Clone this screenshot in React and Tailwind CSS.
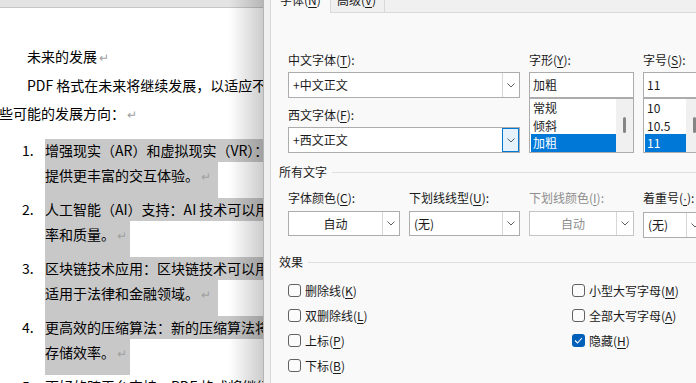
import React from "react";

const cjk = "font-['Noto_Sans_CJK_SC','Noto_Sans',sans-serif]";

const Mark = () => <span className="text-[#a0a0a0] text-[12px] ml-[2px]">↵</span>;

const U = ({ c }) => <span className="underline underline-offset-[2px]">{c}</span>;

const items = [
  {
    n: "1.",
    a: "增强现实（AR）和虚拟现实（VR）：PDF 文件可能会集成 AR 和 VR 内容，",
    b: "提供更丰富的交互体验。",
    w: "w-[173px]",
  },
  {
    n: "2.",
    a: "人工智能（AI）支持：AI 技术可以用于自动化文档处理，提高处理效",
    b: "率和质量。",
    w: "w-[85px]",
  },
  {
    n: "3.",
    a: "区块链技术应用：区块链技术可以用于确保 PDF 文件的真实性和完整性，",
    b: "适用于法律和金融领域。",
    w: "w-[173px]",
  },
  {
    n: "4.",
    a: "更高效的压缩算法：新的压缩算法将进一步减小文件大小，提高传输和",
    b: "存储效率。",
    w: "w-[85px]",
  },
];

const Chevron = () => (
  <svg width="8" height="5" viewBox="0 0 8 5" fill="none">
    <path d="M0.5 0.5L4 4L7.5 0.5" stroke="#5c5c5c" strokeWidth="1" />
  </svg>
);

function Combo({ className, text, center, disabled, focused }) {
  return (
    <div className={`flex border bg-white ${disabled ? "border-[#c4c4c4]" : "border-[#acacac]"} ${className}`}>
      <div
        className={`flex-1 flex items-center px-[4px] whitespace-nowrap overflow-hidden ${center ? "justify-center" : ""} ${disabled ? "text-[#8d8d8d]" : ""}`}
      >
        {text}
      </div>
      <div
        className={`w-[17px] shrink-0 flex items-center justify-center ${focused ? "border border-[#0078d4] bg-[#e5f1fb]" : "border-l border-[#d6d6d6]"}`}
      >
        <Chevron />
      </div>
    </div>
  );
}

function ListBox({ items, sel, className }) {
  return (
    <div className={`flex border border-[#acacac] bg-white h-[55px] ${className}`}>
      <div className="flex-1 pl-[1px] overflow-hidden">
        {items.map((t, i) => (
          <div
            key={t}
            className={`h-[17.5px] leading-[17.5px] pl-[2px] whitespace-nowrap ${i === sel ? "bg-[#0078d7] text-white" : ""}`}
          >
            {t}
          </div>
        ))}
      </div>
      <div className="w-[17px] shrink-0 bg-[#f0f0f0] flex justify-center pt-[18px]">
        <div className="w-[3px] h-[16px] bg-[#858585] rounded-full" />
      </div>
    </div>
  );
}

function Check({ label, checked }) {
  return (
    <div className="h-[25px] flex items-center">
      <div
        className={`w-[13px] h-[13px] rounded-[3px] flex items-center justify-center ${checked ? "bg-[#005fb8]" : "border border-[#616161] bg-[#fbfbfb]"}`}
      >
        {checked && (
          <svg width="9" height="7" viewBox="0 0 9 7" fill="none">
            <path d="M1 3.5L3.5 6L8 1" stroke="white" strokeWidth="1.1" />
          </svg>
        )}
      </div>
      <span className="ml-[4px] whitespace-nowrap">{label}</span>
    </div>
  );
}

function Header({ text }) {
  return (
    <div className="flex items-center pl-[8px] h-[16px] leading-[16px]">
      <span className="whitespace-nowrap">{text}</span>
      <div className="flex-1 h-px bg-[#e0e0e0] ml-[5px]" />
    </div>
  );
}

function Document() {
  return (
    <div className={`relative w-[263px] h-full overflow-hidden bg-white text-[14px] text-black ${cjk}`}>
      <div className="h-[8px] bg-[#e4e4e4] border-b border-[#c6c6c6]" />
      <div className="mt-[34px] leading-[28px] pl-[27px] whitespace-nowrap">
        未来的发展
        <Mark />
      </div>
      <div className="leading-[28px] whitespace-nowrap">
        <div className="pl-[27px]">PDF 格式在未来将继续发展，以适应不断变化的技术需求。以下是一</div>
        <div className="-ml-[1px]">
          些可能的发展方向：
          <Mark />
        </div>
      </div>
      <div className="mt-[11px]">
        {items.map((it) => (
          <div key={it.n}>
            <div className="h-[23px] flex">
              <div className="w-[45px] shrink-0 pl-[22px] leading-[23px]">{it.n}</div>
              <div className="flex-1 min-w-0 overflow-hidden bg-[#c8c8c8] leading-[23px] whitespace-nowrap">{it.a}</div>
            </div>
            <div className="h-[36px] flex">
              <div className="w-[45px] shrink-0" />
              <div className={`${it.w} bg-[#c8c8c8] leading-[26px] whitespace-nowrap`}>
                {it.b}
                <Mark />
              </div>
            </div>
          </div>
        ))}
        <div className="h-[23px] flex">
          <div className="w-[45px] shrink-0 pl-[22px] leading-[23px]">5.</div>
          <div className="flex-1 min-w-0 overflow-hidden leading-[23px] whitespace-nowrap">
            更好的跨平台支持：PDF 格式将继续优化在不同设备上的显示效果，
          </div>
        </div>
      </div>
      <div className="absolute right-0 top-0 bottom-0 w-[34px] bg-linear-to-r from-transparent to-black/20 pointer-events-none" />
    </div>
  );
}

function FontDialog() {
  return (
    <div className={`flex-1 h-full overflow-hidden bg-[#f0f0f0] border-l border-[#b4b4b4] pl-[6px] text-[12px] text-[#1a1a1a] ${cjk}`}>
      <div className="w-[440px] h-full flex flex-col border-l border-[#d9d9d9]">
        <div className="h-[13px] flex shrink-0">
          <div className="w-[60px] bg-[#f9f9f9] border-r border-[#d9d9d9] overflow-hidden">
            <div className="-mt-[8px] leading-[16px] pl-[9px] whitespace-nowrap">
              字体(<U c="N" />)
            </div>
          </div>
          <div className="w-[54px] bg-[#f0f0f0] border-r border-b border-[#d9d9d9] overflow-hidden">
            <div className="-mt-[8px] leading-[16px] pl-[6px] whitespace-nowrap">
              高级(<U c="V" />)
            </div>
          </div>
          <div className="flex-1 border-b border-[#d9d9d9]" />
        </div>

        <div className="flex-1 bg-[#f9f9f9]">
          <div className="flex gap-[9px] pl-[17px] mt-[39px]">
            <div className="w-[232px] shrink-0">
              <div className="leading-[16px]">
                中文字体(<U c="T" />):
              </div>
              <Combo className="mt-[4px] h-[26px]" text="+中文正文" />
              <div className="leading-[16px] mt-[9px]">
                西文字体(<U c="F" />):
              </div>
              <Combo className="mt-[4px] h-[26px]" text="+西文正文" focused />
            </div>
            <div className="w-[105px] shrink-0">
              <div className="leading-[16px]">
                字形(<U c="Y" />):
              </div>
              <div className="mt-[4px] h-[26px] border border-[#acacac] bg-white flex items-center px-[3px]">加粗</div>
              <ListBox items={["常规", "倾斜", "加粗"]} sel={2} />
            </div>
            <div className="w-[61px] shrink-0">
              <div className="leading-[16px] whitespace-nowrap">
                字号(<U c="S" />):
              </div>
              <div className="mt-[4px] h-[26px] border border-[#acacac] bg-white flex items-center px-[3px]">11</div>
              <ListBox items={["10", "10.5", "11"]} sel={2} />
            </div>
          </div>

          <div className="mt-[11px]">
            <Header text="所有文字" />
          </div>

          <div className="flex gap-[9px] pl-[17px] mt-[10px]">
            <div className="w-[112px] shrink-0">
              <div className="leading-[16px] whitespace-nowrap">
                字体颜色(<U c="C" />):
              </div>
              <Combo className="mt-[5px] h-[25px]" text="自动" center />
            </div>
            <div className="w-[111px] shrink-0">
              <div className="leading-[16px] whitespace-nowrap">
                下划线线型(<U c="U" />):
              </div>
              <Combo className="mt-[5px] h-[25px]" text="(无)" />
            </div>
            <div className="w-[105px] shrink-0">
              <div className="leading-[16px] whitespace-nowrap text-[#8d8d8d]">
                下划线颜色(<U c="I" />):
              </div>
              <Combo className="mt-[5px] h-[25px]" text="自动" center disabled />
            </div>
            <div className="w-[61px] shrink-0">
              <div className="leading-[16px] whitespace-nowrap">
                着重号(
                <span className="font-['Liberation_Sans',sans-serif] underline underline-offset-[2px]">·</span>):
              </div>
              <Combo className="mt-[5px] h-[26px]" text="(无)" />
            </div>
          </div>

          <div className="mt-[16px]">
            <Header text="效果" />
          </div>

          <div className="flex pl-[17px] mt-[8px]">
            <div className="w-[284px] shrink-0">
              <Check label={<>删除线(<U c="K" />)</>} />
              <Check label={<>双删除线(<U c="L" />)</>} />
              <Check label={<>上标(<U c="P" />)</>} />
              <Check label={<>下标(<U c="B" />)</>} />
            </div>
            <div>
              <Check label={<>小型大写字母(<U c="M" />)</>} />
              <Check label={<>全部大写字母(<U c="A" />)</>} />
              <Check label={<>隐藏(<U c="H" />)</>} checked />
            </div>
          </div>
        </div>
      </div>
    </div>
  );
}

export default function App() {
  return (
    <div className="w-[696px] h-[383px] overflow-hidden flex bg-white">
      <Document />
      <FontDialog />
    </div>
  );
}
